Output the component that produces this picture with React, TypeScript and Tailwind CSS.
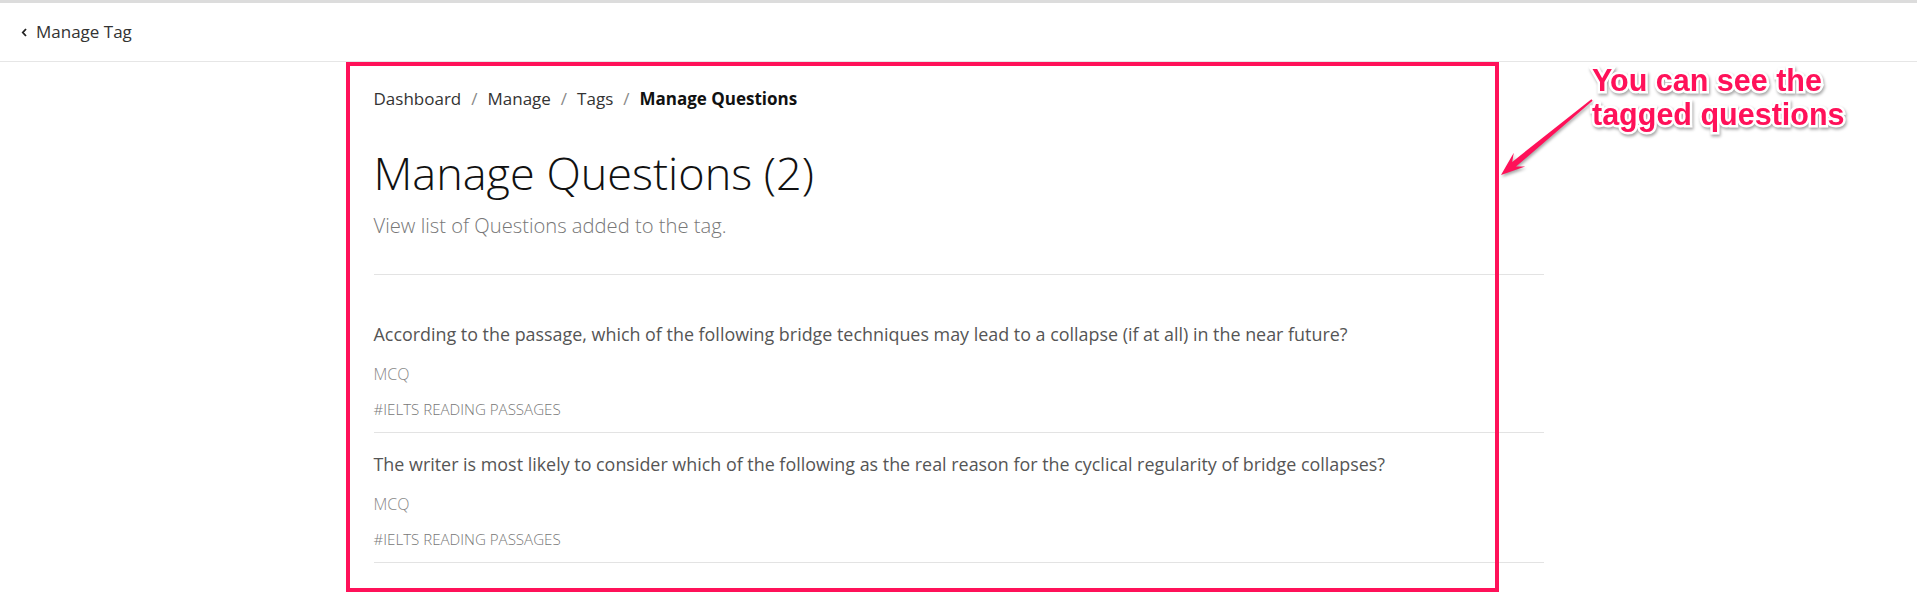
import React from 'react';

interface Question {
  text: string;
  type: string;
  tags: string[];
}

const questions: Question[] = [
  {
    text: 'According to the passage, which of the following bridge techniques may lead to a collapse (if at all) in the near future?',
    type: 'MCQ',
    tags: ['IELTS READING PASSAGES'],
  },
  {
    text: 'The writer is most likely to consider which of the following as the real reason for the cyclical regularity of bridge collapses?',
    type: 'MCQ',
    tags: ['IELTS READING PASSAGES'],
  },
];

const crumbs = ['Dashboard', 'Manage', 'Tags'];

const App: React.FC = () => {
  return (
    <div className="relative min-h-[594px] bg-white font-['Open_Sans',sans-serif] border-t-[3px] border-[#dcdcdc]">
      <header className="flex h-[59px] items-center border-b border-[#e6e6e6] pl-[21px]">
        <svg width="7" height="9" viewBox="0 0 7 9" className="mr-[8px] mt-[1px]">
          <path d="M5 1 L1.8 4.5 L5 8" fill="none" stroke="#222" strokeWidth="1.8" />
        </svg>
        <span className="text-[17px] text-[#333]">Manage Tag</span>
      </header>

      <main className="mx-auto w-[1170px] pt-[25px]">
        <nav className="flex items-center text-[17px] leading-[24px] text-[#333]">
          {crumbs.map((c) => (
            <React.Fragment key={c}>
              <span>{c}</span>
              <span className="mx-[10px] text-[#888]">/</span>
            </React.Fragment>
          ))}
          <span className="font-bold text-[#111]">Manage Questions</span>
        </nav>

        <h1 className="mt-[34px] text-[45px] font-light leading-[56px] text-[#111]">
          Manage Questions (2)
        </h1>
        <p className="mt-[10px] text-[20.2px] font-light leading-[28px] text-[#777]">
          View list of Questions added to the tag.
        </p>

        <div className="mt-[35px] border-b border-[#e3e3e3]" />

        <ul className="pt-[28px]">
          {questions.map((q, i) => (
            <li key={i} className="border-b border-[#e3e3e3] pt-[19px] pb-[13px]">
              <p className="text-[17.9px] leading-[24px] text-[#555]">{q.text}</p>
              <p className="mt-[17px] text-[16px] font-light leading-[22px] text-[#888]">{q.type}</p>
              <p className="mt-[14px] text-[15.1px] font-light leading-[20px] text-[#777]">
                {q.tags.map((t) => `#${t}`).join(' ')}
              </p>
            </li>
          ))}
        </ul>
      </main>

      {/* annotation overlay */}
      <div className="pointer-events-none absolute left-[346px] top-[59px] h-[530px] w-[1153px] border-4 border-[#ff1159]" />

      <svg
        className="pointer-events-none absolute left-[1490px] top-[85px] drop-shadow-[1px_2px_1.5px_rgba(0,0,0,0.35)]"
        width="120"
        height="100"
        viewBox="0 0 120 100"
      >
        <polygon
          points="102.6,12.8 26,78.5 35.2,78.6 11,87 23.8,64.8 22.2,73.9 101.4,11.2"
          fill="#ff1159"
        />
      </svg>

      <div className="pointer-events-none absolute left-[1592px] top-[60px] font-['Liberation_Sans',Arial,sans-serif] text-[30.5px] font-bold leading-[34px] text-[#ff1159] [-webkit-text-stroke:5px_white] [paint-order:stroke_fill] drop-shadow-[1px_2px_1.5px_rgba(0,0,0,0.35)]">
        <div>You can see the</div>
        <div>tagged questions</div>
      </div>
    </div>
  );
};

export default App;
